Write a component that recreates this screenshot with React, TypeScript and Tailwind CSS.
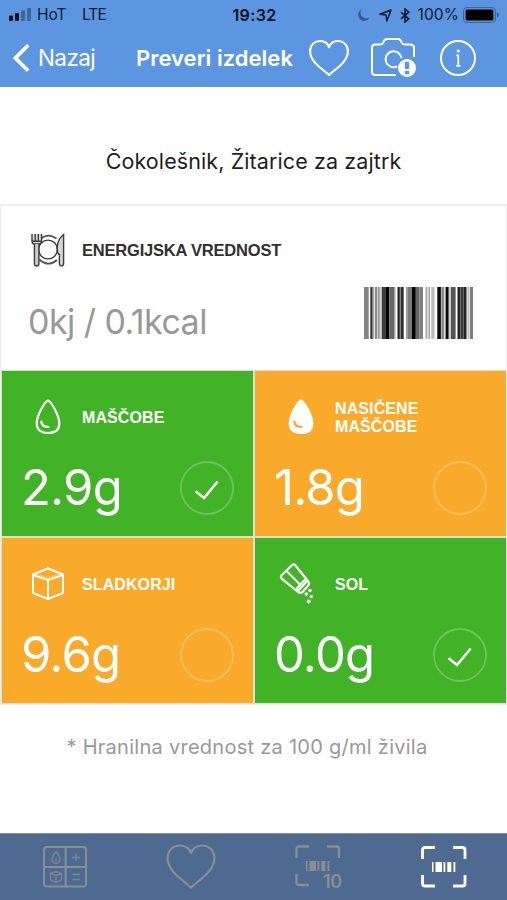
import type { ReactNode } from "react";
import { clsx } from "clsx";

const HEART =
  "M20 37 C15 31.5 2 24 2 12.5 C2 6 6.5 2 11.5 2 C16 2 19 5 20 8.5 C21 5 24 2 28.5 2 C33.5 2 38 6 38 12.5 C38 24 25 31.5 20 37Z";

function HeartIcon({ className, stroke = 2 }: { className: string; stroke?: number }) {
  return (
    <svg viewBox="0 0 40 39" preserveAspectRatio="none" className={className} fill="none" stroke="currentColor" strokeWidth={stroke} strokeLinejoin="round">
      <path d={HEART} />
    </svg>
  );
}

function StatusBar() {
  return (
    <div className="grid h-[30px] grid-cols-[1fr_auto_1fr] items-center pl-[9px] pr-[7px] text-[15.5px] text-[#0b1a30]">
      <div className="flex items-center">
        <svg width="23" height="14" viewBox="0 0 23 14" fill="#06101f">
          <rect x="0" y="7.5" width="4" height="5.5" rx="1" />
          <rect x="6" y="5" width="4" height="8" rx="1" />
          <rect x="12" y="2.5" width="4" height="10.5" rx="1" opacity=".35" />
          <rect x="18" y="0" width="4" height="13" rx="1" opacity=".35" />
        </svg>
        <span className="ml-[5px] w-[45px]">HoT</span>
        <span className="tracking-[-0.9px]">LTE</span>
      </div>
      <span className="text-[16px] font-semibold tracking-[0.35px] text-[#06101f]">19:32</span>
      <div className="flex items-center justify-end">
        <svg width="12" height="12" viewBox="0 0 12 12" className="mr-[9px] opacity-60" fill="#18345c">
          <path d="M3.6.4A6 6 0 1 0 11.7 8.2 5.7 5.7 0 0 1 3.6.4Z" />
        </svg>
        <svg width="13" height="13" viewBox="0 0 13 13" className="mr-[8px]" fill="none" stroke="currentColor" strokeWidth="1.5" strokeLinejoin="round">
          <path d="M12 1 7.8 12 7 6 1 5.2Z" />
        </svg>
        <svg width="10" height="15" viewBox="0 0 10 15" className="mr-[8px]" fill="none" stroke="currentColor" strokeWidth="1.6">
          <path d="M1 4.2 8.7 10.8 5 14V1L8.7 4.2 1 10.8" />
        </svg>
        <span className="tracking-[0.1px]">100%</span>
        <svg width="37" height="16" viewBox="0 0 37 16" className="ml-[4px]">
          <rect x=".6" y=".6" width="31.8" height="14.8" rx="3" fill="none" stroke="#3a5f92" strokeWidth="1" />
          <rect x="2.6" y="2.6" width="27.8" height="10.8" rx="1.5" fill="#000" />
          <path d="M34 5.2q2 1 2 2.8t-2 2.8Z" fill="#3a5f92" />
        </svg>
      </div>
    </div>
  );
}

function NavBar() {
  return (
    <div className="flex h-[57px] items-center pl-[12px] text-white">
      <svg width="19" height="30" viewBox="0 0 19 30" className="-mt-[2px]" fill="none" stroke="currentColor" strokeWidth="3.7">
        <path d="M16.2 2.2 3.4 15 16.2 27.8" />
      </svg>
      <span className="-mt-px ml-[7px] w-[98px] text-[22.5px] tracking-[-0.6px]">Nazaj</span>
      <span className="w-[172px] whitespace-nowrap text-[22px] font-semibold tracking-[0.02px]">Preveri izdelek</span>
      <HeartIcon className="-mt-[2px] h-[38px] w-[42px] shrink-0" />
      <svg width="48" height="42" viewBox="0 0 48 42" className="-mt-[2px] ml-[20px] shrink-0" fill="none" stroke="currentColor" strokeWidth="2">
        <path d="M26 38H5.5Q2 38 2 34.5V11Q2 7.5 5.5 7.5H10.5Q12.5 7.5 13.3 5.5Q14.5 2 17 2H28Q30.5 2 31.7 5.5Q32.5 7.5 34.5 7.5H40Q44 7.5 44 11V20" />
        <path d="M27 29.5A8 8 0 1 1 31.5 21" />
        <circle cx="37" cy="31" r="9" fill="#fff" stroke="none" />
        <rect x="34.8" y="24.7" width="4.4" height="7.2" rx=".8" fill="#5c95e0" stroke="none" />
        <rect x="34.8" y="33.7" width="4.4" height="3.6" rx=".8" fill="#5c95e0" stroke="none" />
      </svg>
      <svg width="38" height="38" viewBox="0 0 38 38" className="-mt-[2px] ml-[21px] shrink-0" fill="none" stroke="currentColor" strokeWidth="2">
        <circle cx="19" cy="19" r="17" />
        <path d="M17.3 16.4H19.3V26.6M17.2 26.8H21.4" strokeWidth="1.7" />
        <circle cx="19.2" cy="12" r="1.6" fill="currentColor" stroke="none" />
      </svg>
    </div>
  );
}

function PlateIcon() {
  return (
    <svg width="34" height="34" viewBox="0 0 34 34" fill="none" stroke="#3c3c3c" strokeWidth="1.4">
      <circle cx="17" cy="16.5" r="9.4" />
      <path d="M9.5 6Q17-.5 25.5 5.5M8.5 26.5Q17 34.5 26 27" stroke="#555" strokeWidth="1.8" />
      <path d="M1 1H10.5V8.5L8.5 11H3L1 8.5Z" fill="#ddd" stroke="none" />
      <path d="M1 1V8Q1 11 3.2 11H8.3Q10.5 11 10.5 8V1M4.2 1V8M7.3 1V8M1 8.2H10.5" />
      <path d="M3.4 11V30.5A2.1 2.4 0 0 0 7.9 30.5V11" fill="#ccc" />
      <path d="M32.6 1.5V30.5A2 2.3 0 0 1 28.4 30.5V21.5Q26 20.5 26.2 14Q27 5.5 32.6 1.5Z" fill="#d5d5d5" />
    </svg>
  );
}

// [x, width, grey] of every bar
const BARS: [number, number, string][] = [
  [0, 4.7, "#858585"],
  [6.3, 2.3, "#333"],
  [9.4, 0.8, "#777"],
  [11, 2.4, "#8c8c8c"],
  [14, 1.7, "#999"],
  [16.4, 1.4, "#aaa"],
  [18, 4, "#3d3d3d"],
  [22, 3.2, "#050505"],
  [25.2, 5.3, "#666"],
  [30.5, 1, "#aaa"],
  [33.5, 2.3, "#222"],
  [36.4, 3.3, "#303030"],
  [42, 1.4, "#999"],
  [43.4, 4.6, "#7a7a7a"],
  [48, 3.8, "#030303"],
  [51.8, 3.8, "#666"],
  [55.6, 3.4, "#808080"],
  [61.5, 2, "#aaa"],
  [64.5, 1.5, "#a2a2a2"],
  [67.2, 3.3, "#bbb"],
  [73.3, 3.6, "#0a0a0a"],
  [77.3, 3, "#8a8a8a"],
  [81.6, 3, "#070707"],
  [85.5, 1, "#999"],
  [87, 4.6, "#555"],
  [93.5, 2.5, "#222"],
  [96.3, 2.7, "#383838"],
  [99.3, 3.2, "#222"],
  [103.5, 1.5, "#bbb"],
  [105.8, 3.2, "#808080"],
];

function Barcode() {
  return (
    <svg width="109" height="52" viewBox="0 0 109 52">
      {BARS.map(([x, w, fill]) => (
        <rect key={x} x={x} y="0" width={w} height="52" fill={fill} />
      ))}
    </svg>
  );
}

function DropIcon({ filled }: { filled?: boolean }) {
  return (
    <svg width="34" height="36" viewBox="0 0 34 36" fill={filled ? "#fff" : "none"} stroke="#fff" strokeWidth="2.2" strokeLinejoin="round">
      <path d="M17 1.5C20 2.4 28.3 16 28.3 24.5C28.3 31.5 23 34 17 34S5.7 31.5 5.7 24.5C5.7 16 14 2.4 17 1.5Z" />
      <path d="M10.3 22.5Q11 28 17.5 28" fill="none" stroke={filled ? "#faa92a" : "#fff"} strokeLinecap="round" />
    </svg>
  );
}

function CubeIcon() {
  return (
    <svg width="34" height="36" viewBox="0 0 34 36" fill="none" stroke="#fff" strokeWidth="2" strokeLinejoin="round">
      <path d="M17 2.5 32 8.5V27L17 33 2 27V8.5ZM2 9 17 14 32 9M17 14V33" />
      <path d="M6 8 17 12 28 8" strokeWidth="1" opacity=".4" />
    </svg>
  );
}

function SaltIcon() {
  return (
    <svg width="36" height="42" viewBox="0 0 36 42" className="-ml-[8px]" fill="none" stroke="#fff" strokeWidth="2.2" strokeLinejoin="round">
      <path d="M13.2 2 2.8 12Q1 14 3.2 16.2L18.5 28.5 28.5 17.5 16.5 2.5Q15 .5 13.2 2Z" />
      <path d="M24.5 18 18.5 24.8Q17 27.5 19.4 29.2Q21.6 31 24 28.4L29 22.8Q31.2 19.8 28.8 17.8Q26.6 15.8 24.5 18Z" />
      <path d="M8 8.5 21 21.5" strokeWidth="2" />
      <g fill="#fff" stroke="none">
        <circle cx="31" cy="27.5" r="1.7" />
        <circle cx="27.3" cy="31" r="1.7" />
        <circle cx="32.3" cy="33.5" r="1.7" />
        <circle cx="29.7" cy="38.6" r="2" />
      </g>
    </svg>
  );
}

function StatusRing({ checked }: { checked?: boolean }) {
  return (
    <svg width="54" height="54" viewBox="0 0 54 54" fill="none" stroke="#fff">
      <circle cx="27" cy="27" r="26" strokeWidth="1.8" opacity=".24" />
      {checked && <path d="M15.6 30.3 24 37 37.7 20.5" strokeWidth="2.5" />}
    </svg>
  );
}

function Tile({
  icon,
  label,
  value,
  good,
}: {
  icon: ReactNode;
  label: ReactNode;
  value: string;
  good?: boolean;
}) {
  return (
    <div className={clsx("flex flex-col", good ? "bg-[#42b326]" : "bg-[#faaa2a]")}>
      <div className="flex h-[92px] items-center pl-[26px]">
        <div className="flex w-[40px] justify-center">{icon}</div>
        <span className="ml-[14px] pt-[2px] font-['Liberation_Sans',sans-serif] text-[16px] font-bold leading-[18px] tracking-[0.1px] text-white">
          {label}
        </span>
      </div>
      <div className="-mt-[2px] flex h-[54px] items-center justify-between pl-[19px] pr-[19px]">
        <span className="pb-[2px] text-[49px] leading-none tracking-[-0.8px] text-white">{value}</span>
        <StatusRing checked={good} />
      </div>
    </div>
  );
}

function ScanIcon({ ten }: { ten?: boolean }) {
  return (
    <svg width="46" height="44" viewBox="0 0 46 44" fill="none" stroke="currentColor" strokeWidth={ten ? 2.3 : 2.8}>
      <path d="M1.5 14V5Q1.5 2.5 4 2.5H14M32 2.5H41.5Q44 2.5 44 5V14M1.5 30V38.5Q1.5 41 4 41H14" />
      {!ten && <path d="M32 41H41.5Q44 41 44 38.5V30" />}
      <g fill="currentColor" stroke="none">
        <rect x="11" y="17" width="1.5" height="10" />
        <rect x="14.5" y="17" width="6.5" height="10" />
        <rect x="22.5" y="17" width="1.8" height="10" />
        <rect x="26.3" y="17" width="4" height="10" />
        <rect x="32.5" y="17" width="1.8" height="10" />
      </g>
    </svg>
  );
}

function CalculatorIcon() {
  return (
    <svg width="44" height="42" viewBox="0 0 44 42" className="ml-[3px]" fill="none" stroke="currentColor" strokeWidth="2">
      <rect x="1" y="1" width="42" height="39.5" rx="2.5" />
      <path d="M22.7 1V40.5M1 21H43" />
      <g strokeWidth="1.4" opacity=".8">
        <path d="M13 5.5C15 8 17 11 17 13.5A4 4 0 0 1 9 13.5C9 11 11 8 13 5.5ZM13 12V16" />
        <path d="M7.5 27.5 13 25.5 18.5 27.5V34L13 36.5 7.5 34ZM7.5 27.5 13 29.5 18.5 27.5M13 29.5V36.5" />
        <path d="M29 11.5H37M33 7.5V15.5M29.5 28.5H37M29.5 33.5H37" />
      </g>
    </svg>
  );
}

function TabBar() {
  return (
    <nav className="mt-auto grid h-[67px] grid-cols-4 place-items-center border-t border-[#7790b3] bg-[#4e6a91] text-[#8b8e93]">
      <CalculatorIcon />
      <HeartIcon className="-mt-[2px] ml-[2px] h-[47px] w-[52px]" stroke={1.7} />
      <div className="relative -mt-[2px] ml-[2px]">
        <ScanIcon ten />
        <span className="absolute -right-px bottom-[-4px] text-[18px] font-semibold leading-[20px] tracking-[-0.3px]">10</span>
      </div>
      <div className="text-white">
        <ScanIcon />
      </div>
    </nav>
  );
}

export default function App() {
  return (
    <div className="flex h-[900px] w-[507px] flex-col overflow-hidden bg-white font-[Inter,sans-serif]">
      <header className="h-[87px] bg-[#5d96e0]">
        <StatusBar />
        <NavBar />
      </header>

      <h1 className="flex h-[117px] items-center justify-center pt-[32px] text-[21.5px] tracking-[0.1px] text-[#1e1e1e]">
        Čokolešnik, Žitarice za zajtrk
      </h1>

      <main className="border border-t-2 border-[#ededed]">
        <section className="h-[164px] pl-[27px] pr-[33px] pt-[27px]">
          <div className="flex items-center pl-[3px]">
            <PlateIcon />
            <span className="ml-[17px] font-['Liberation_Sans',sans-serif] text-[16.5px] font-bold tracking-[-0.2px] text-[#303030]">
              ENERGIJSKA VREDNOST
            </span>
          </div>
          <div className="mt-[20px] flex items-start justify-between">
            <span className="mt-[15px] text-[34px] leading-[40px] tracking-[-0.55px] text-[#989898]">0kj / 0.1kcal</span>
            <Barcode />
          </div>
        </section>

        <section className="grid grid-cols-2 grid-rows-[165px_165px] gap-[2px] bg-[#dfdfce] p-px pr-0">
          <Tile good icon={<DropIcon />} label="MAŠČOBE" value="2.9g" />
          <Tile
            icon={<DropIcon filled />}
            label={
              <>
                NASIČENE
                <br />
                MAŠČOBE
              </>
            }
            value="1.8g"
          />
          <Tile icon={<CubeIcon />} label="SLADKORJI" value="9.6g" />
          <Tile good icon={<SaltIcon />} label="SOL" value="0.0g" />
        </section>
      </main>

      <p className="mt-[29px] pr-[13px] text-center text-[20px] leading-[26px] tracking-[0.27px] text-[#999]">
        * Hranilna vrednost za 100 g/ml živila
      </p>

      <TabBar />
    </div>
  );
}
